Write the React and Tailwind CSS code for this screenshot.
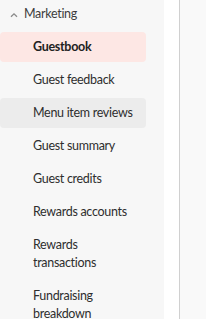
import React from "react";

const items = [
  { label: "Guestbook", active: true },
  { label: "Guest feedback" },
  { label: "Menu item reviews", hover: true },
  { label: "Guest summary" },
  { label: "Guest credits" },
  { label: "Rewards accounts" },
  { label: "Rewards transactions", lines: ["Rewards", "transactions"] },
  { label: "Fundraising breakdown", lines: ["Fundraising", "breakdown"] },
];

export default function App() {
  return (
    <div
      className="flex h-[319px] w-[206px] overflow-hidden"
      style={{ fontFamily: "Lato, 'Open Sans', sans-serif" }}
    >
      <div className="w-[164px] shrink-0 bg-[#f7f7f7]">
        <div className="flex h-[29px] items-center pl-[10px] text-[12.5px] tracking-[-0.3px] text-[#3d3d3d]">
          <svg width="8" height="6" viewBox="0 0 8 6" className="mr-[6px] mt-[1px]">
            <path d="M1 4.8 L4 1.8 L7 4.8" fill="none" stroke="#8a8a8a" strokeWidth="1.3" />
          </svg>
          Marketing
        </div>
        <div className="mt-[3px] flex flex-col gap-[3px]">
          {items.map((it) => (
            <div
              key={it.label}
              className={
                "w-[146px] rounded-[4px] pl-[33px] text-[12.5px] tracking-[-0.3px] " +
                (it.lines ? "py-[6px] leading-[18px] " : "flex h-[30px] items-center pt-px ") +
                (it.active
                  ? "bg-[#fde7e4] font-bold text-[#222]"
                  : it.hover
                  ? "bg-[#ececec] text-[#2e2e2e]"
                  : "text-[#2e2e2e]")
              }
            >
              {it.lines ? (
                <>
                  <div>{it.lines[0]}</div>
                  <div>{it.lines[1]}</div>
                </>
              ) : (
                it.label
              )}
            </div>
          ))}
        </div>
      </div>
      <div className="w-[15px] shrink-0 bg-white" />
      <div className="w-px shrink-0 bg-[#d0d0d0]" />
      <div className="flex-1 bg-[#f9f9f9]" />
    </div>
  );
}
